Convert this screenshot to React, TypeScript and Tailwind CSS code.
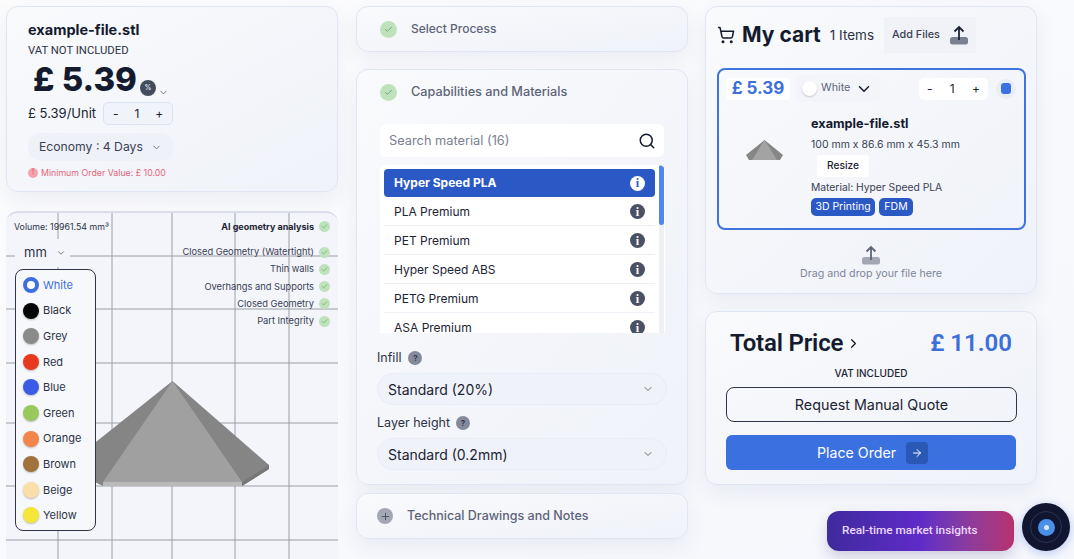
import { Check, ChevronDown, ChevronRight, Plus, Search, ShoppingCart, ArrowRight } from 'lucide-react';

const materials = ['PLA Premium', 'PET Premium', 'Hyper Speed ABS', 'PETG Premium', 'ASA Premium'];
const analysis = ['Closed Geometry (Watertight)', 'Thin walls', 'Overhangs and Supports', 'Closed Geometry', 'Part Integrity'];
const colours = [
  { name: 'Black', bg: 'bg-[#050505]' },
  { name: 'Grey', bg: 'bg-[#8a8a8a]' },
  { name: 'Red', bg: 'bg-[#e8391f]' },
  { name: 'Blue', bg: 'bg-[#3a5be8]' },
  { name: 'Green', bg: 'bg-[#9bc85c]' },
  { name: 'Orange', bg: 'bg-[#f2854a]' },
  { name: 'Brown', bg: 'bg-[#a0723c]' },
  { name: 'Beige', bg: 'bg-[#fadfa8]' },
  { name: 'Yellow', bg: 'bg-[#f5e63a]' },
];

const card = 'rounded-xl border border-[#dfe5f2] bg-gradient-to-br from-[#f9fafc] to-[#eff2f9] shadow-[0_8px_20px_rgba(60,80,130,0.08)]';

function Tick({ size = 'w-[11px] h-[11px]', icon = 7 }: { size?: string; icon?: number }) {
  return (
    <span className={`${size} flex items-center justify-center rounded-full bg-[#bfe2bd] text-[#6aa86a] shrink-0`}>
      <Check size={icon} strokeWidth={2.5} />
    </span>
  );
}

function Stepper({ className }: { className: string }) {
  return (
    <div className={`flex items-center justify-between rounded-[5px] text-[12px] text-[#1c2333] ${className}`}>
      <span>-</span>
      <span>1</span>
      <span>+</span>
    </div>
  );
}

function InfoDot({ active }: { active?: boolean }) {
  return (
    <span className={`flex h-[15px] w-[15px] items-center justify-center rounded-full font-['Liberation_Serif',serif] text-[12px] font-bold ${active ? 'bg-white text-[#2a58c5]' : 'bg-[#4a5164] text-white'}`}>
      i
    </span>
  );
}

function UploadIcon({ dark }: { dark?: boolean }) {
  return (
    <svg width="20" height="20" viewBox="0 0 20 20" fill="none">
      <rect x="1" y="12" width="18" height="7.5" rx="2.5" fill={dark ? '#7b8091' : '#a3a7b3'} />
      <path d="M10 15V2M5.5 6.5 10 2l4.5 4.5" stroke={dark ? '#1c2333' : '#5d6478'} strokeWidth="1.8" />
    </svg>
  );
}

function Viewer() {
  return (
    <svg className="absolute inset-0" width="332" height="346" viewBox="0 0 332 346" fill="none">
      <g stroke="#9c9ea6" strokeWidth="1">
        <path d="M52 0V346M106 0V346M166 0V346M229 0V346M283 0V346" />
        <path d="M0 43H332M0 96H332M0 150H332M0 210H332M0 273H332M0 327H332" />
      </g>
      <path d="M166.5 168 263 252 263 256 236 273 97 273 61 256V252Z" fill="#858585" />
      <path d="M166.5 168 236 269H97Z" fill="#a0a0a0" />
      <path d="M97 269H236V273H97Z" fill="#b9b9b9" />
      <path d="M236 269 263 252V256L236 273Z" fill="#777777" />
    </svg>
  );
}

export default function App() {
  return (
    <div className="relative h-[559px] w-[1074px] overflow-hidden bg-gradient-to-br from-[#fcfcfd] to-[#f5f7fc] font-['Inter',sans-serif] text-[#1c2333]">
      <div className="flex items-start pl-[6px] pt-[6px]">
        {/* left column */}
        <div className="flex w-[332px] flex-col gap-[19px]">
          <div className={`${card} h-[186px] pl-[21px] pt-[14px]`}>
            <div className="text-[14.5px] font-bold leading-[18px] text-[#141b2e]">example-file.stl</div>
            <div className="mt-[5px] font-['Roboto',sans-serif] text-[11.3px] leading-[14px] text-[#2c3345]">VAT NOT INCLUDED</div>
            <div className="mt-[1px] flex items-end pl-[5px]">
              <span className="text-[33px] font-extrabold leading-[40px] text-[#141b2e]">£ 5.39</span>
              <span className="mb-[3px] ml-[3px] flex h-[16px] w-[16px] items-center justify-center rounded-full bg-[#434c5f] text-[7px] text-white">%</span>
              <ChevronDown size={11} className="mb-[1px] ml-[2px] text-[#6a7081]" />
            </div>
            <div className="mt-[3px] flex items-center">
              <span className="text-[13px] text-[#1c2333]">£ 5.39/Unit</span>
              <Stepper className="ml-[7px] h-[23px] w-[70px] border border-[#dbe3f3] bg-[#f0f3fa] px-[9px]" />
            </div>
            <div className="mt-[8px] flex h-[28px] w-[146px] items-center justify-between rounded-full bg-[#eef1f8] pl-[11px] pr-[12px] text-[12.2px] text-[#3a4154]">
              Economy : 4 Days
              <ChevronDown size={11} className="text-[#6a7081]" />
            </div>
            <div className="mt-[5px] flex items-center gap-[3px] text-[8.8px] text-[#e2677a]">
              <span className="flex h-[10px] w-[10px] items-center justify-center rounded-full bg-[#f2a3ad] text-[7px] text-[#d8475c]">!</span>
              Minimum Order Value: £ 10.00
            </div>
          </div>

          <div className="relative h-[348px] rounded-t-xl border-t-2 border-[#d8dde9] bg-[#f3f5fb]">
            <Viewer />
            <div className="relative flex justify-between pl-[8px] pr-[8px] pt-[7px]">
              <div className="flex flex-col">
                <div className="text-[8.8px] leading-[14px] text-[#2c3345]">Volume: 19961.54 mm³</div>
                <div className="ml-[1px] mt-[5px] flex h-[28px] w-[55px] items-center gap-[9px] bg-[#f3f5fb] pl-[9px] text-[13px] text-[#2c3345]">
                  mm
                  <ChevronDown size={10} className="text-[#5d6478]" />
                </div>
                <div className="ml-[1px] mt-[2px] flex h-[262px] w-[81px] flex-col gap-[9.6px] rounded-lg border border-[#30364a] bg-[#f7f8fc] pl-[7px] pt-[7px] text-[11px] text-[#2c3345]">
                  <div className="flex h-[16px] items-center gap-[4px] text-[#3d6ee0]">
                    <span className="h-[16px] w-[16px] rounded-full border-[4px] border-[#3d6ee0] bg-white" />
                    White
                  </div>
                  {colours.map((c) => (
                    <div key={c.name} className="flex h-[16px] items-center gap-[4px]">
                      <span className={`h-[16px] w-[16px] rounded-full shadow-[0_1px_2px_rgba(0,0,0,0.25)] ${c.bg}`} />
                      {c.name}
                    </div>
                  ))}
                </div>
              </div>
              <div className="flex flex-col items-end">
                <div className="flex h-[13px] items-center gap-[5px] text-[9px] font-bold text-[#1c2333]">
                  AI geometry analysis
                  <Tick />
                </div>
                <div className="mt-[12px] flex flex-col items-end gap-[3.3px]">
                  {analysis.map((a) => (
                    <div key={a} className="flex h-[14px] items-center gap-[5px] text-[9.3px] text-[#3a4154]">
                      {a}
                      <Tick />
                    </div>
                  ))}
                </div>
              </div>
            </div>
          </div>
        </div>

        {/* middle column */}
        <div className="ml-[18px] flex w-[332px] flex-col">
          <div className={`${card} flex h-[46px] items-center gap-[14px] pl-[23px] text-[12px] font-medium text-[#5d6478]`}>
            <Tick size="w-[17px] h-[17px]" icon={9} />
            Select Process
          </div>

          <div className={`${card} mt-[17px] h-[416px] px-[20px]`}>
            <div className="flex h-[44px] items-center gap-[14px] pl-[3px] text-[12.7px] font-medium text-[#5d6478]">
              <Tick size="w-[17px] h-[17px]" icon={9} />
              Capabilities and Materials
            </div>
            <div className="ml-[3px] mt-[10px] flex h-[33px] w-[284px] items-center justify-between rounded-md bg-white pl-[9px] pr-[8px] text-[12.8px] text-[#7b8091]">
              Search material (16)
              <Search size={18} className="text-[#141b2e]" />
            </div>
            <div className="relative ml-[3px] mt-[8px] h-[168px] w-[285px] overflow-hidden rounded-t-md bg-white pl-[4px] pr-[9px] pt-[4px] text-[12px] text-[#1c2333]">
              <div className="flex h-[28px] w-[271px] items-center justify-between rounded-[4px] bg-[#2a58c5] pl-[10px] pr-[10px] font-bold text-white">
                Hyper Speed PLA
                <InfoDot active />
              </div>
              {materials.map((m) => (
                <div key={m} className="flex h-[29px] w-[271px] items-center justify-between border-b border-[#eef0f5] pl-[10px] pr-[10px] pt-[1px]">
                  {m}
                  <InfoDot />
                </div>
              ))}
              <div className="absolute bottom-0 right-[1px] top-0 w-[5px] bg-[#eef0f5]">
                <div className="h-[60px] rounded-full bg-[#4f86f0]" />
              </div>
            </div>
            <div className="mt-[17px] flex items-center gap-[7px] text-[12.5px] leading-[16px] text-[#2c3345]">
              Infill
              <span className="flex h-[14px] w-[14px] items-center justify-center rounded-full bg-[#858a9a] text-[8px] font-bold text-[#30364a]">?</span>
            </div>
            <div className="mt-[7px] flex h-[32px] w-[290px] items-center justify-between rounded-full border border-[#e8ecf5] bg-[#eff2f9] pl-[10px] pr-[12px] text-[14px] text-[#1c2333]">
              Standard (20%)
              <ChevronDown size={12} className="text-[#6a7081]" />
            </div>
            <div className="mt-[10px] flex items-center gap-[6px] text-[12.5px] leading-[16px] text-[#2c3345]">
              Layer height
              <span className="flex h-[14px] w-[14px] items-center justify-center rounded-full bg-[#858a9a] text-[8px] font-bold text-[#30364a]">?</span>
            </div>
            <div className="mt-[7px] flex h-[32px] w-[290px] items-center justify-between rounded-full border border-[#e8ecf5] bg-[#eff2f9] pl-[10px] pr-[12px] text-[14px] text-[#1c2333]">
              Standard (0.2mm)
              <ChevronDown size={12} className="text-[#6a7081]" />
            </div>
          </div>

          <div className={`${card} mt-[8px] flex h-[46px] items-center gap-[14px] pl-[20px] text-[12.5px] font-medium text-[#5d6478]`}>
            <span className="flex h-[16px] w-[16px] items-center justify-center rounded-full bg-[#a3a7b3] text-[#4a5164]">
              <Plus size={11} />
            </span>
            Technical Drawings and Notes
          </div>
        </div>

        {/* right column */}
        <div className="ml-[17px] flex w-[332px] flex-col">
          <div className={`${card} h-[288px] px-[11px] pt-[10px]`}>
            <div className="flex h-[36px] items-center">
              <ShoppingCart size={18} className="text-[#141b2e]" />
              <span className="ml-[7px] text-[21px] font-bold text-[#141b2e]">My cart</span>
              <span className="ml-[9px] text-[13.5px] text-[#2c3345]">1 Items</span>
              <div className="ml-[10px] flex h-[36px] w-[92px] items-center gap-[9px] bg-[#f0f2f7] pl-[8px] text-[10.8px] font-medium text-[#3a4154]">
                Add Files
                <UploadIcon dark />
              </div>
            </div>
            <div className="mt-[15px] h-[162px] w-[309px] rounded-lg border-2 border-[#3f73de] px-[7px] pt-[5px]">
              <div className="flex items-center">
                <div className="flex h-[22px] w-[64px] items-center justify-center rounded-[4px] bg-white text-[17px] font-bold text-[#3b6fdc]">£ 5.39</div>
                <div className="ml-[6px] flex h-[27px] w-[85px] items-center rounded-md bg-[#f3f5fa] pl-[6px] text-[10.8px] text-[#5d6478]">
                  <span className="h-[15px] w-[15px] rounded-full bg-white shadow-[0_1px_2px_rgba(0,0,0,0.2)]" />
                  <span className="ml-[4px]">White</span>
                  <ChevronDown size={18} className="ml-[5px] text-[#141b2e]" />
                </div>
                <Stepper className="ml-[38px] h-[22px] w-[69px] bg-white px-[8px]" />
                <span className="ml-[8px] flex h-[20px] w-[20px] items-center justify-center rounded-full bg-[#e9edf6]">
                  <span className="h-[11px] w-[10px] rounded-[3px] bg-[#3a70e0]" />
                </span>
              </div>
              <div className="mt-[13px] flex">
                <svg className="ml-[20px] mt-[25px]" width="37" height="21" viewBox="0 0 37 21">
                  <path d="M18.5 0 37 15 34 20H3L0 15Z" fill="#868686" />
                  <path d="M18.5 0 31 20H6Z" fill="#a3a3a3" />
                </svg>
                <div className="ml-[28px] flex flex-col items-start">
                  <div className="text-[12.7px] font-bold leading-[18px] text-[#141b2e]">example-file.stl</div>
                  <div className="mt-[4px] text-[10.5px] leading-[15px] text-[#3a4154]">100 mm x 86.6 mm x 45.3 mm</div>
                  <div className="ml-[6px] mt-[3px] flex h-[22px] w-[52px] items-center justify-center rounded-[3px] bg-white text-[10.2px] font-medium text-[#1c2333]">Resize</div>
                  <div className="mt-[3px] text-[10.3px] leading-[15px] text-[#3a4154]">Material: Hyper Speed PLA</div>
                  <div className="mt-[3px] flex gap-[4px] text-[10.5px] text-white">
                    <span className="flex h-[18px] w-[64px] items-center justify-center rounded-[5px] bg-[#2a58c5]">3D Printing</span>
                    <span className="flex h-[18px] w-[34px] items-center justify-center rounded-[5px] bg-[#2a58c5]">FDM</span>
                  </div>
                </div>
              </div>
            </div>
            <div className="mt-[15px] flex flex-col items-center text-[10.7px] text-[#80869a]">
              <UploadIcon />
              <span className="mt-[1px]">Drag and drop your file here</span>
            </div>
          </div>

          <div className={`${card} mt-[17px] h-[174px] px-[20px]`}>
            <div className="mt-[14px] flex h-[34px] items-center justify-between px-[4px] font-['Roboto',sans-serif]">
              <div className="flex items-center gap-[3px]">
                <span className="text-[24px] font-semibold tracking-[-0.2px] text-[#141b2e]">Total Price</span>
                <ChevronRight size={15} className="text-[#141b2e]" />
              </div>
              <span className="text-[24px] font-semibold text-[#3b6fdc]">£ 11.00</span>
            </div>
            <div className="mt-[6px] text-center text-[10px] font-medium leading-[14px] text-[#1c2333]">VAT INCLUDED</div>
            <div className="mt-[7px] flex h-[35px] w-[291px] items-center justify-center rounded-lg border border-[#30364a] text-[14.3px] text-[#1c2333]">Request Manual Quote</div>
            <div className="mt-[13px] flex h-[35px] w-[290px] items-center justify-center gap-[10px] rounded-md bg-[#3a70e0] pl-[3px] text-[14.2px] text-white">
              Place Order
              <span className="flex h-[22px] w-[22px] items-center justify-center rounded-[4px] bg-[#2a58b5]">
                <ArrowRight size={12} />
              </span>
            </div>
          </div>
        </div>
      </div>

      {/* floating widgets */}
      <div className="absolute left-[827px] top-[511px] flex h-[40px] w-[187px] items-center rounded-xl bg-gradient-to-r from-[#3f2a9e] via-[#5f2bc8] to-[#b8306f] pl-[15px] font-['Roboto',sans-serif] text-[11.8px] font-medium text-[#ecd9fb] shadow-[0_6px_14px_rgba(60,40,120,0.2)]">
        Real-time market insights
      </div>
      <div className="absolute left-[1022px] top-[503px] flex h-[48px] w-[48px] items-center justify-center rounded-full bg-[#101630] shadow-[0_2px_10px_rgba(70,110,230,0.35)]">
        <span className="flex h-[32px] w-[32px] items-center justify-center rounded-full border border-[#2a3354]">
          <span className="flex h-[17px] w-[17px] items-center justify-center rounded-full bg-[#4a8fe8]">
            <span className="h-[5px] w-[5px] rounded-full bg-[#dbe8fb]" />
          </span>
        </span>
      </div>
    </div>
  );
}
